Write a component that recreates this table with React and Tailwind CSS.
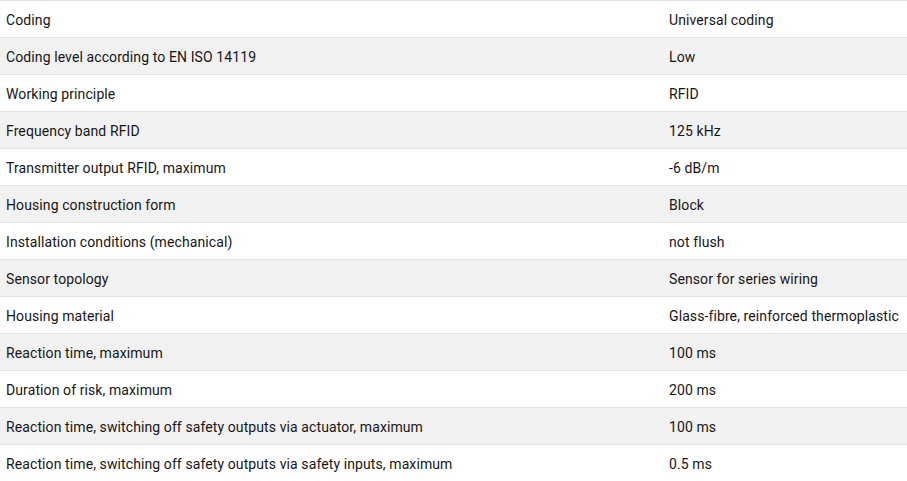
import React from "react";

const rows = [
  ["Coding", "Universal coding"],
  ["Coding level according to EN ISO 14119", "Low"],
  ["Working principle", "RFID"],
  ["Frequency band RFID", "125 kHz"],
  ["Transmitter output RFID, maximum", "-6 dB/m"],
  ["Housing construction form", "Block"],
  ["Installation conditions (mechanical)", "not flush"],
  ["Sensor topology", "Sensor for series wiring"],
  ["Housing material", "Glass-fibre, reinforced thermoplastic"],
  ["Reaction time, maximum", "100 ms"],
  ["Duration of risk, maximum", "200 ms"],
  ["Reaction time, switching off safety outputs via actuator, maximum", "100 ms"],
  ["Reaction time, switching off safety outputs via safety inputs, maximum", "0.5 ms"],
];

export default function App() {
  return (
    <div
      className="w-[907px] bg-white text-[14px] leading-[18px] tracking-[0.1px] text-[#161616] border-t border-[#e3e3e3]"
      style={{ fontFamily: "Roboto, 'Liberation Sans', sans-serif" }}
    >
      {rows.map(([k, v], i) => (
        <div
          key={i}
          className={`flex h-[37px] items-center pt-[2px] border-b border-[#e3e3e3] ${i % 2 === 1 ? "bg-[#f1f1f1]" : "bg-white"}`}
        >
          <div className="w-[663px] pl-[6px] whitespace-nowrap">{k}</div>
          <div className="flex-1 pl-[6px] whitespace-nowrap">{v}</div>
        </div>
      ))}
    </div>
  );
}
